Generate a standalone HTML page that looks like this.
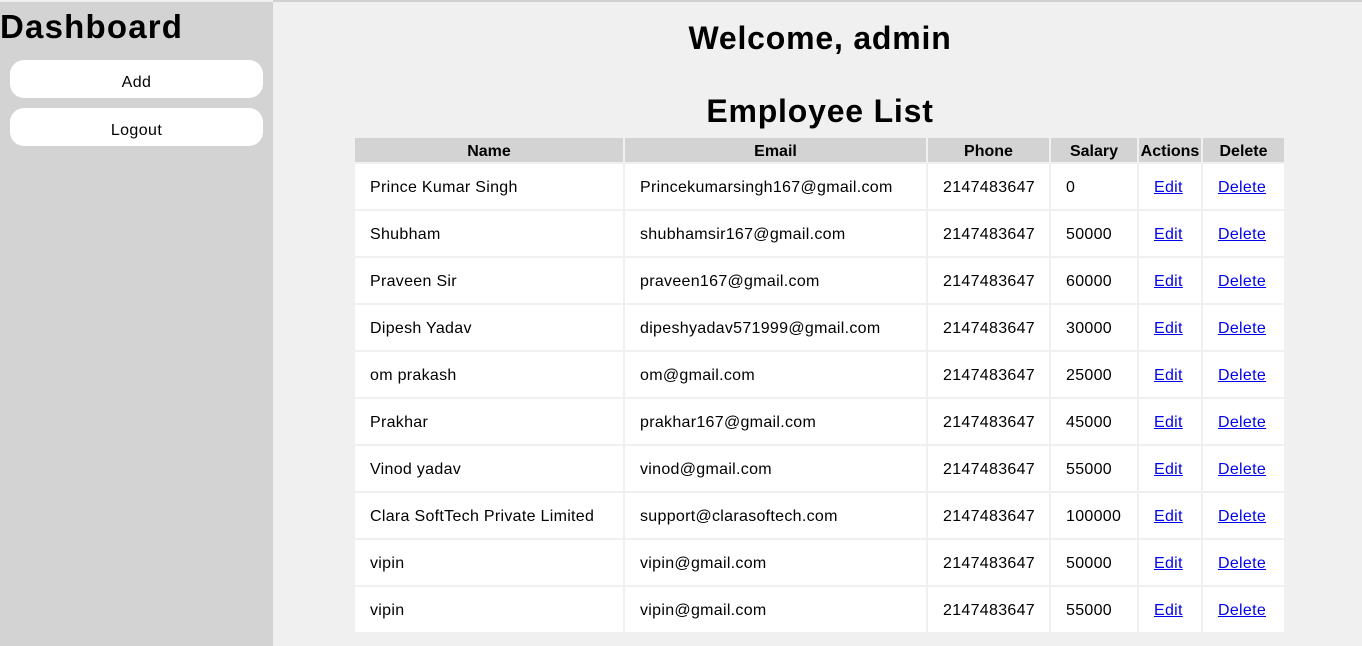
<!DOCTYPE html>
<html><head><style>
*{margin:0;padding:0;box-sizing:border-box}
body{width:1362px;height:646px;overflow:hidden;background:#f0f0f0;font-family:"Liberation Sans",sans-serif;color:#000;position:relative}
.side{position:absolute;left:0;top:2px;width:273px;height:644px;background:#d3d3d3}
.topline{position:absolute;left:273px;top:0;width:1089px;height:2px;background:#d0d0d0}
.side h1{font-size:33px;font-weight:bold;position:absolute;left:0;top:6px;letter-spacing:1.2px}
.btn{position:absolute;left:10px;width:253px;height:38px;background:#fff;border-radius:14px;text-align:center;line-height:38px;padding-top:4px;font-size:16px;letter-spacing:0.4px}
h2{position:absolute;left:273px;width:1094px;text-align:center;font-size:32px;font-weight:bold;letter-spacing:0.8px}
table{position:absolute;left:353px;top:136px;border-spacing:2px;border-collapse:separate;table-layout:fixed}
th{background:#d3d3d3;height:24px;font-size:16px;font-weight:bold;text-align:center;padding:3px 0 0 0}
td{background:#fff;height:45px;font-size:16px;padding:3px 0 0 15px;white-space:nowrap;letter-spacing:0.3px}
a{color:#00e;text-decoration:underline}
</style></head><body>
<div class="topline"></div>
<div class="side"><h1>Dashboard</h1>
<div class="btn" style="top:58px">Add</div>
<div class="btn" style="top:106px">Logout</div></div>
<h2 style="top:20px">Welcome, admin</h2>
<h2 style="top:93px">Employee List</h2>
<table>
<colgroup><col style="width:268px"><col style="width:301px"><col style="width:121px"><col style="width:86px"><col style="width:62px"><col style="width:81px"></colgroup>
<tr><th>Name</th><th>Email</th><th>Phone</th><th>Salary</th><th>Actions</th><th>Delete</th></tr>
<tr><td>Prince Kumar Singh</td><td>Princekumarsingh167@gmail.com</td><td>2147483647</td><td>0</td><td><a>Edit</a></td><td><a>Delete</a></td></tr>
<tr><td>Shubham</td><td>shubhamsir167@gmail.com</td><td>2147483647</td><td>50000</td><td><a>Edit</a></td><td><a>Delete</a></td></tr>
<tr><td>Praveen Sir</td><td>praveen167@gmail.com</td><td>2147483647</td><td>60000</td><td><a>Edit</a></td><td><a>Delete</a></td></tr>
<tr><td>Dipesh Yadav</td><td>dipeshyadav571999@gmail.com</td><td>2147483647</td><td>30000</td><td><a>Edit</a></td><td><a>Delete</a></td></tr>
<tr><td>om prakash</td><td>om@gmail.com</td><td>2147483647</td><td>25000</td><td><a>Edit</a></td><td><a>Delete</a></td></tr>
<tr><td>Prakhar</td><td>prakhar167@gmail.com</td><td>2147483647</td><td>45000</td><td><a>Edit</a></td><td><a>Delete</a></td></tr>
<tr><td>Vinod yadav</td><td>vinod@gmail.com</td><td>2147483647</td><td>55000</td><td><a>Edit</a></td><td><a>Delete</a></td></tr>
<tr><td>Clara SoftTech Private Limited</td><td>support@clarasoftech.com</td><td>2147483647</td><td>100000</td><td><a>Edit</a></td><td><a>Delete</a></td></tr>
<tr><td>vipin</td><td>vipin@gmail.com</td><td>2147483647</td><td>50000</td><td><a>Edit</a></td><td><a>Delete</a></td></tr>
<tr><td>vipin</td><td>vipin@gmail.com</td><td>2147483647</td><td>55000</td><td><a>Edit</a></td><td><a>Delete</a></td></tr>
</table>
</body></html>
